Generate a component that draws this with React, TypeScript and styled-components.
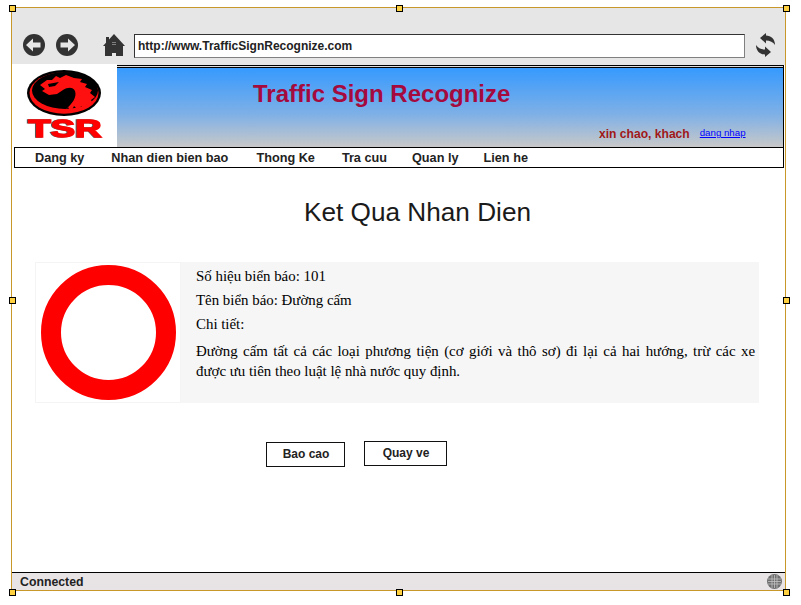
import React from 'react';
import styled, { createGlobalStyle } from 'styled-components';

const GlobalStyle = createGlobalStyle`
  html, body {
    margin: 0;
    padding: 0;
    background: #ffffff;
    font-family: 'Liberation Sans', Arial, sans-serif;
  }
  body {
    min-height: 605px;
  }
`;

const menuItems = [
  { label: 'Dang ky', gap: 27 },
  { label: 'Nhan dien bien bao', gap: 28 },
  { label: 'Thong Ke', gap: 27 },
  { label: 'Tra cuu', gap: 25 },
  { label: 'Quan ly', gap: 25 },
  { label: 'Lien he', gap: 0 },
];

const handles = [
  { x: 0, y: 0 },
  { x: 50, y: 0 },
  { x: 100, y: 0 },
  { x: 0, y: 50 },
  { x: 100, y: 50 },
  { x: 0, y: 100 },
  { x: 50, y: 100 },
  { x: 100, y: 100 },
];

const ArrowButton: React.FC<{ flip?: boolean }> = ({ flip }) => (
  <RoundIcon viewBox="0 0 22 22" $flip={flip}>
    <circle cx="11" cy="11" r="11" fill="#333333" />
    <path d="M3 11 L10 4.5 V8.5 H17.5 V13.5 H10 V17.5 Z" fill="#e6e6e6" />
  </RoundIcon>
);

const HomeIcon = () => (
  <svg width="22" height="22" viewBox="0 0 22 22">
    <path d="M11 0 L22 12 H20 V22 H13 V19 H9 V22 H2 V12 H0 L3 8.7 V3 H6 V5.5 Z" fill="#333333" />
    <rect x="9.5" y="8" width="1" height="1" fill="#cccccc" />
    <rect x="11.5" y="8" width="1" height="1" fill="#cccccc" />
    <rect x="9.5" y="10" width="1" height="1" fill="#cccccc" />
    <rect x="11.5" y="10" width="1" height="1" fill="#cccccc" />
  </svg>
);

const RefreshIcon = () => (
  <svg width="22" height="24" viewBox="0 0 22 24">
    <path d="M5 5 L11 0 V2.5 C16 2.5 20 6 20 12 C18 9 15 7.5 11 7.5 V10.5 Z" fill="#333333" />
    <path d="M16 19 L10 24 V21.5 C5 21.5 1 18 1 12 C3 15 6 16.5 10 16.5 V13.5 Z" fill="#333333" />
  </svg>
);

const GlobeIcon = () => (
  <svg width="15" height="15" viewBox="0 0 15 15">
    <circle cx="7.5" cy="7.5" r="7.5" fill="#6e6e6e" />
    <path
      d="M1 5 H14 M1 7.5 H14 M1 10 H14 M5 1 V14 M7.5 1 V14 M10 1 V14"
      stroke="#c4c4c4"
      strokeWidth="0.8"
    />
  </svg>
);

const DragonLogo = () => (
  <LogoSvg width="78" height="72" viewBox="0 0 78 72">
    <ellipse cx="38" cy="23" rx="37" ry="23" fill="#000000" />
    <ellipse cx="38" cy="23" rx="34.5" ry="20.7" fill="#ff1010" />
    <ellipse cx="39" cy="20.5" rx="33" ry="18.5" fill="#000000" />
    <path
      d="M14 15 L21 10 L26 10 L30 6 L34 8 L40 5 L48 8 L56 9 L54 12 L61 14 L59 17 L66 20 L64 23 L69 27 L65 30 L67 34 L61 34 L60 39 L55 36 L53 41 L48 36 L45 42 L42 37 L39 40 C47 33 51 27 49 21 C47 17 42 17 37 20 L31 24 L23 25 L16 21 L19 19 Z"
      fill="#ff1010"
    />
    <path d="M22 14 L33 12 L29 16 L23 17 Z" fill="#000000" />
    <LogoText x="39" y="67" textAnchor="middle" textLength="73" lengthAdjust="spacingAndGlyphs">
      TSR
    </LogoText>
  </LogoSvg>
);

const App: React.FC = () => (
  <>
    <GlobalStyle />
    <Window>
      {handles.map((h) => (
        <Handle key={`${h.x}-${h.y}`} $x={h.x} $y={h.y} />
      ))}
      <Toolbar>
        <ArrowGroup>
          <ArrowButton />
          <ArrowButton flip />
        </ArrowGroup>
        <HomeSlot>
          <HomeIcon />
        </HomeSlot>
        <AddressBar>http://www.TrafficSignRecognize.com</AddressBar>
        <RefreshSlot>
          <RefreshIcon />
        </RefreshSlot>
      </Toolbar>
      <Header>
        <LogoBox>
          <DragonLogo />
        </LogoBox>
        <Banner>
          <BannerTitle>Traffic Sign Recognize</BannerTitle>
          <UserRow>
            <Greeting>xin chao, khach</Greeting>
            <LoginLink href="#">dang nhap</LoginLink>
          </UserRow>
        </Banner>
      </Header>
      <Nav>
        {menuItems.map((item) => (
          <NavItem key={item.label} $gap={item.gap}>
            {item.label}
          </NavItem>
        ))}
      </Nav>
      <Main>
        <PageTitle>Ket Qua Nhan Dien</PageTitle>
        <ResultCard>
          <SignBox>
            <svg width="135" height="135" viewBox="0 0 135 135">
              <circle cx="67.5" cy="67.5" r="57.5" fill="#ffffff" stroke="#ff0000" strokeWidth="20" />
            </svg>
          </SignBox>
          <Details>
            <DetailLine>Số hiệu biển báo: 101</DetailLine>
            <DetailLine>Tên biển báo: Đường cấm</DetailLine>
            <DetailLine>Chi tiết:</DetailLine>
            <Description>
              <FullLine>Đường cấm tất cả các loại phương tiện (cơ giới và thô sơ) đi lại cả hai hướng, trừ các xe</FullLine>
              <div>được ưu tiên theo luật lệ nhà nước quy định.</div>
            </Description>
          </Details>
        </ResultCard>
        <Actions>
          <ActionButton $width={79} $lift={0}>Bao cao</ActionButton>
          <ActionButton $width={83} $lift={1}>Quay ve</ActionButton>
        </Actions>
      </Main>
      <StatusBar>
        <StatusText>Connected</StatusText>
        <GlobeIcon />
      </StatusBar>
    </Window>
  </>
);

const Window = styled.div`
  position: relative;
  box-sizing: border-box;
  width: 775px;
  height: 584px;
  margin: 7px 0 0 11px;
  border: 1px solid #c8982a;
  display: flex;
  flex-direction: column;
  background: #ffffff;
`;

const Handle = styled.div<{ $x: number; $y: number }>`
  position: absolute;
  z-index: 2;
  left: calc(${(p) => p.$x}% + ${(p) => p.$x / 100}px);
  top: calc(${(p) => p.$y}% + ${(p) => p.$y / 50}px);
  width: 5px;
  height: 5px;
  margin: -3px 0 0 -3px;
  background: #ffd040;
  border: 1px solid #000000;
`;

const Toolbar = styled.div`
  height: 57px;
  flex-shrink: 0;
  box-sizing: border-box;
  padding: 26px 0 0 11px;
  display: flex;
  align-items: flex-start;
  background: #e6e6e6;
`;

const ArrowGroup = styled.div`
  display: flex;
  gap: 11px;
`;

const RoundIcon = styled.svg<{ $flip?: boolean }>`
  width: 22px;
  height: 22px;
  transform: ${(p) => (p.$flip ? 'scaleX(-1)' : 'none')};
`;

const HomeSlot = styled.div`
  margin: 0 0 0 25px;
  line-height: 0;
`;

const AddressBar = styled.div`
  box-sizing: border-box;
  width: 611px;
  height: 24px;
  margin-left: 9px;
  padding-left: 3px;
  display: flex;
  align-items: center;
  background: #ffffff;
  border: 1px solid #808080;
  border-top-color: #333333;
  border-left-color: #333333;
  font-size: 12px;
  font-weight: bold;
  color: #222222;
`;

const RefreshSlot = styled.div`
  margin: -1px 0 0 10px;
  line-height: 0;
`;

const Header = styled.div`
  display: flex;
  height: 82px;
  flex-shrink: 0;
`;

const LogoBox = styled.div`
  width: 105px;
  height: 81px;
  margin-top: -1px;
  box-sizing: border-box;
  padding: 6px 0 0 14px;
  background: #ffffff;
`;

const LogoSvg = styled.svg`
  overflow: visible;
`;

const LogoText = styled.text`
  font-family: 'Liberation Sans', Arial, sans-serif;
  font-size: 24px;
  font-weight: bold;
  fill: #ff0000;
  stroke: #ff0000;
  stroke-width: 1.4px;
  filter: drop-shadow(-1px 0 0 #555555);
`;

const Banner = styled.div`
  flex: 1;
  box-sizing: border-box;
  margin-right: 1px;
  border-top: 1px solid #000000;
  border-right: 1px solid #000000;
  box-shadow: inset 0 1px 0 #dddddd, inset 0 2px 0 #000000;
  padding: 13px 0 0 136px;
  display: flex;
  flex-direction: column;
  background: linear-gradient(180deg, #3399ff 0%, #7fb0e6 60%, #c8c8c8 100%);
`;

const BannerTitle = styled.div`
  font-size: 24px;
  font-weight: bold;
  line-height: 29px;
  color: #a50a3e;
`;

const UserRow = styled.div`
  display: flex;
  align-items: flex-start;
  margin: 19px 0 0 346px;
`;

const Greeting = styled.span`
  font-size: 12.1px;
  font-weight: bold;
  color: #a01818;
`;

const LoginLink = styled.a`
  margin: 0 0 0 10px;
  font-size: 9.7px;
  color: #0000ff;
`;

const Nav = styled.nav`
  box-sizing: border-box;
  height: 21px;
  flex-shrink: 0;
  margin: 0 1px 0 2px;
  padding-left: 20px;
  display: flex;
  align-items: center;
  border: 1px solid #000000;
`;

const NavItem = styled.span<{ $gap: number }>`
  margin-right: ${(p) => p.$gap}px;
  font-size: 12.7px;
  font-weight: bold;
  color: #222222;
`;

const Main = styled.main`
  flex: 1;
  min-height: 0;
  padding: 30px 26px 0 23px;
`;

const PageTitle = styled.h1`
  margin: 0 0 35px;
  padding-left: 41px;
  font-size: 26.2px;
  font-weight: normal;
  line-height: 29px;
  text-align: center;
  color: #1a1a1a;
`;

const ResultCard = styled.section`
  display: flex;
  height: 141px;
  background: #f6f6f6;
`;

const SignBox = styled.div`
  width: 146px;
  flex-shrink: 0;
  box-sizing: border-box;
  padding-left: 5px;
  display: flex;
  align-items: center;
  background: #ffffff;
  border: 1px solid #f4f4f4;
`;

const Details = styled.div`
  flex: 1;
  padding: 2px 4px 0 15px;
  font-family: 'Liberation Serif', 'Times New Roman', serif;
  font-size: 14.9px;
  color: #000000;
`;

const DetailLine = styled.div`
  height: 24px;
  line-height: 24px;
`;

const Description = styled.div`
  margin: 5px 0 0;
  line-height: 20px;
`;

const FullLine = styled.div`
  text-align: justify;
  text-align-last: justify;
`;

const Actions = styled.div`
  display: flex;
  gap: 19px;
  margin: 38px 0 0 231px;
  align-items: flex-start;
`;

const ActionButton = styled.div<{ $width: number; $lift: number }>`
  box-sizing: border-box;
  width: ${(p) => p.$width}px;
  height: 25px;
  margin-top: ${(p) => 1 - p.$lift}px;
  padding: 0 0 2px 1px;
  display: flex;
  align-items: center;
  justify-content: center;
  border: 1px solid #111111;
  font-size: 12px;
  font-weight: bold;
  color: #222222;
`;

const StatusBar = styled.footer`
  box-sizing: border-box;
  height: 18px;
  flex-shrink: 0;
  padding: 0 3px 0 8px;
  display: flex;
  align-items: center;
  justify-content: space-between;
  background: #e8e4e6;
  border-top: 1px solid #000000;
`;

const StatusText = styled.span`
  font-size: 12.3px;
  font-weight: bold;
  color: #222222;
`;

export default App;
